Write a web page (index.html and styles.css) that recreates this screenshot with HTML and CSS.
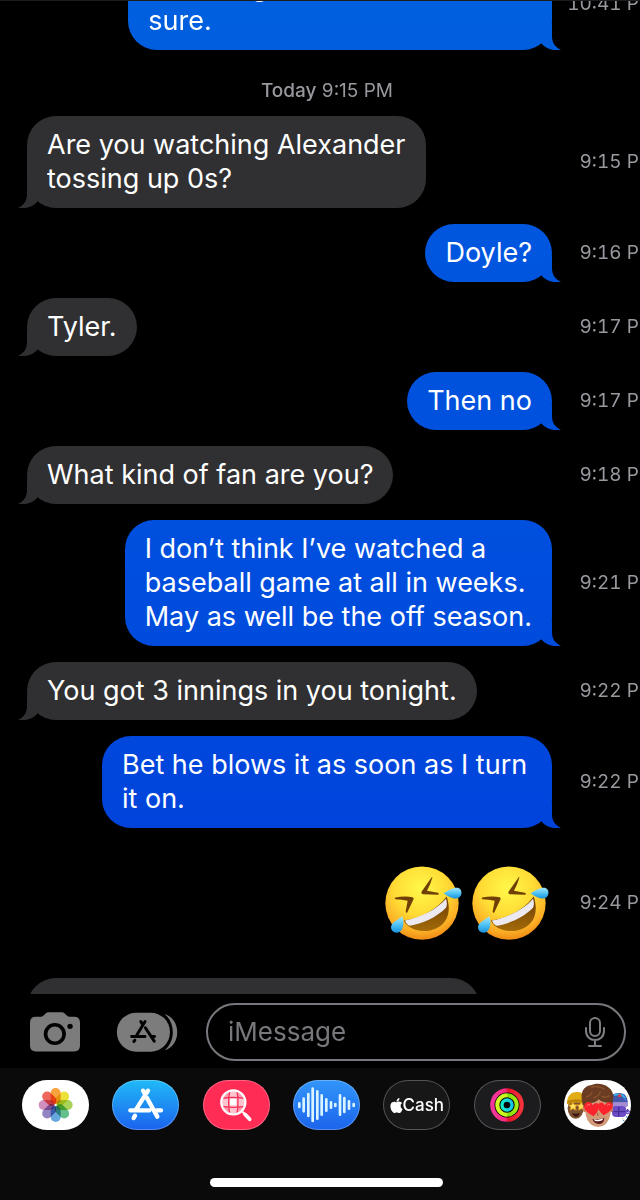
FILE: index.html
```html
<!DOCTYPE html>
<html lang="en">
<head>
<meta charset="utf-8">
<meta name="viewport" content="width=device-width, initial-scale=1">
<title>Messages</title>
<link rel="stylesheet" href="styles.css">
</head>
<body>
<svg class="defs" aria-hidden="true">
  <defs>
    <radialGradient id="face" cx=".48" cy=".3" r=".72">
      <stop offset="0" stop-color="#fff84a"/><stop offset=".5" stop-color="#ffdb35"/><stop offset=".82" stop-color="#fbae25"/><stop offset="1" stop-color="#ed8413"/>
    </radialGradient>
    <linearGradient id="tear" x1="0" y1="0" x2="0" y2="1">
      <stop offset="0" stop-color="#a5e9ff"/><stop offset=".55" stop-color="#4cc0f4"/><stop offset="1" stop-color="#1692dd"/>
    </linearGradient>
    <linearGradient id="mouth" x1="0" y1="0" x2="0" y2="1">
      <stop offset="0" stop-color="#6e3c04"/><stop offset="1" stop-color="#a26a08"/>
    </linearGradient>
    <symbol id="rofl" viewBox="40 45 246 230">
      <circle cx="157" cy="159" r="110" fill="url(#face)"/>
      <path d="M77 142Q105 137 129 141Q134 143 131 149L113 186Q109 191 108 184L114 152Q96 147 77 147Q73 144 77 142Z" fill="#6f3f05"/>
      <path d="M188 82Q189 78 184 84L156 124Q153 131 160 132L205 134Q211 131 204 128L172 122Q183 102 188 82Z" fill="#6f3f05"/>
      <path d="M102 211C150 205 203 178 231 139C244 177 238 217 201 234C164 251 118 242 102 211Z" fill="url(#mouth)"/>
      <path d="M106 211C151 203 204 177 229 146C233 157 232 167 229 173C201 202 157 221 120 227C112 223 107 216 106 211Z" fill="#eceaf0"/>
      <path d="M222 129C236 120 253 111 265 113C282 118 277 146 259 145C246 145 231 136 222 129Z" fill="url(#tear)"/>
      <path d="M98 198C104 214 102 236 91 244C77 254 60 241 65 226C69 215 86 208 98 198Z" fill="url(#tear)"/>
    </symbol>
    <linearGradient id="pink" x1="0" x2="1"><stop offset="0" stop-color="#f4369c"/><stop offset=".45" stop-color="#f92d80"/><stop offset=".55" stop-color="#e6142c"/><stop offset="1" stop-color="#f5333c"/></linearGradient>
    <linearGradient id="lime" x1="0" x2="1"><stop offset="0" stop-color="#d2fb22"/><stop offset=".5" stop-color="#c4f51c"/><stop offset=".55" stop-color="#7edb08"/><stop offset="1" stop-color="#a5ee12"/></linearGradient>
    <linearGradient id="aqua" x1="0" x2="1"><stop offset="0" stop-color="#16eccb"/><stop offset="1" stop-color="#13c7e8"/></linearGradient>
  </defs>
</svg>

<div class="phone">
  <main class="transcript">
    <div class="thread">
      <div class="row sent">
        <p class="bubble">Watching for them to lose, but<br>sure.<span class="tail"></span></p>
        <time>10:41 PM</time>
      </div>
      <p class="date"><b>Today</b> 9:15 PM</p>
      <div class="row received">
        <p class="bubble">Are you watching Alexander<br>tossing up 0s?<span class="tail"></span></p>
        <time>9:15 PM</time>
      </div>
      <div class="row sent">
        <p class="bubble">Doyle?<span class="tail"></span></p>
        <time>9:16 PM</time>
      </div>
      <div class="row received">
        <p class="bubble">Tyler.<span class="tail"></span></p>
        <time>9:17 PM</time>
      </div>
      <div class="row sent">
        <p class="bubble">Then no<span class="tail"></span></p>
        <time>9:17 PM</time>
      </div>
      <div class="row received">
        <p class="bubble">What kind of fan are you?<span class="tail"></span></p>
        <time>9:18 PM</time>
      </div>
      <div class="row sent">
        <p class="bubble">I don’t think I’ve watched a<br>baseball game at all in weeks.<br>May as well be the off season.<span class="tail"></span></p>
        <time>9:21 PM</time>
      </div>
      <div class="row received">
        <p class="bubble">You got 3 innings in you tonight.<span class="tail"></span></p>
        <time>9:22 PM</time>
      </div>
      <div class="row sent">
        <p class="bubble wrapped">Bet he blows it as soon as I turn it on.<span class="tail"></span></p>
        <time>9:22 PM</time>
      </div>
      <div class="row sent">
        <div class="emoji" role="img" aria-label="Rolling on the floor laughing, twice">
          <svg><use href="#rofl"/></svg>
          <svg><use href="#rofl"/></svg>
        </div>
        <time>9:24 PM</time>
      </div>
      <div class="row received">
        <div class="bubble next"></div>
      </div>
    </div>
  </main>

  <form class="composer">
    <button type="button" class="tool camera" aria-label="Camera">
      <svg viewBox="90 157 151 120">
        <path d="M108 171H122Q127 171 131 167L138 160Q141 157 146 157H186Q191 157 194 160L201 167Q205 171 210 171H223Q241 171 241 189V258Q241 276 223 276H108Q90 276 90 258V189Q90 171 108 171Z" fill="#7c7c7c"/>
        <circle cx="165" cy="223" r="28" fill="none" stroke="#000" stroke-width="11"/>
        <circle cx="211" cy="200" r="8" fill="#000"/>
      </svg>
    </button>
    <button type="button" class="tool apps" aria-label="Apps">
      <svg viewBox="348 155 186 122">
        <rect x="349" y="157" width="162" height="119" rx="59" fill="#7c7c7c"/>
        <path d="M495 161C546 178 546 255 495 272C528 243 528 190 495 161Z" fill="#7c7c7c"/>
        <g fill="none" stroke="#000" stroke-width="9" stroke-linecap="round">
          <path d="M435 184L410 225M422 184L427 192M436 203L463 244M394 230H435M454 230H464M404 241L401 245"/>
        </g>
      </svg>
    </button>
    <div class="field">
      <input type="text" placeholder="iMessage" aria-label="iMessage">
      <button type="button" class="mic" aria-label="Dictate">
        <svg viewBox="0 0 22 32" fill="none" stroke="#7e7e82" stroke-width="2" stroke-linecap="round">
          <rect x="6" y="2" width="10" height="18" rx="5"/>
          <path d="M2 12V15C2 27 20 27 20 15V12M11 24V30M5 30H17"/>
        </svg>
      </button>
    </div>
  </form>

  <footer class="drawer">
    <nav class="strip" aria-label="iMessage apps">
      <button type="button" class="pill white" aria-label="Photos">
        <svg viewBox="65 30 201 150">
          <g class="petals">
            <rect x="151" y="54" width="30" height="48" rx="15" fill="#f9a33c"/>
            <rect x="151" y="54" width="30" height="48" rx="15" fill="#ece13a" transform="rotate(45 166 105)"/>
            <rect x="151" y="54" width="30" height="48" rx="15" fill="#a9d35a" transform="rotate(90 166 105)"/>
            <rect x="151" y="54" width="30" height="48" rx="15" fill="#65bf8c" transform="rotate(135 166 105)"/>
            <rect x="151" y="54" width="30" height="48" rx="15" fill="#67a8de" transform="rotate(180 166 105)"/>
            <rect x="151" y="54" width="30" height="48" rx="15" fill="#9285c2" transform="rotate(225 166 105)"/>
            <rect x="151" y="54" width="30" height="48" rx="15" fill="#d18fbd" transform="rotate(270 166 105)"/>
            <rect x="151" y="54" width="30" height="48" rx="15" fill="#ef665c" transform="rotate(315 166 105)"/>
          </g>
        </svg>
      </button>
      <button type="button" class="pill store" aria-label="App Store">
        <svg viewBox="336 30 201 150" fill="none" stroke="#fff" stroke-width="13" stroke-linecap="round">
          <path d="M444 62L408 119M429 62L435 72M441 84L472 140M391 121H448M470 121H483M405 137L401 144"/>
        </svg>
      </button>
      <button type="button" class="pill images" aria-label="Images">
        <svg viewBox="38 30 201 150">
          <circle cx="129" cy="97" r="33" fill="#ff9caf"/>
          <path d="M116 64H142V130H116ZM96 86H162V108H96Z" fill="#ffc4cf"/>
          <path d="M119 87H138V106H119Z" fill="#fff"/>
          <path d="M96 85Q129 79 162 85M96 109Q129 115 162 109M118 64Q112 97 118 130M140 64Q146 97 140 130" fill="none" stroke="#f92e55" stroke-width="4"/>
          <circle cx="129" cy="97" r="36" fill="none" stroke="#fff" stroke-width="7"/>
          <path d="M156 125L163 132" stroke="#fff" stroke-width="6"/>
          <path d="M164 133L178 148" stroke="#fff" stroke-width="11" stroke-linecap="round"/>
        </svg>
      </button>
      <button type="button" class="pill audio" aria-label="Audio">
        <svg viewBox="309 30 201 150" stroke="#d9f3ff" stroke-width="8" stroke-linecap="round">
          <path d="M328 100V111M341 86V124M355 72V138M368 56V153M382 64V146M395 76V134M409 88V122M423 97V113M436 102V108M450 76V134M463 84V126M477 94V116M491 102V108"/>
        </svg>
      </button>
      <button type="button" class="pill cash" aria-label="Apple Cash">
        <svg class="apple" viewBox="2 0 20 24" fill="#fff"><path d="M12.152 6.896c-.948 0-2.415-1.078-3.96-1.04-2.04.027-3.91 1.183-4.961 3.014-2.117 3.675-.546 9.103 1.519 12.09 1.013 1.454 2.208 3.09 3.792 3.039 1.52-.065 2.09-.987 3.935-.987 1.831 0 2.35.987 3.96.948 1.637-.026 2.676-1.48 3.676-2.948 1.156-1.688 1.636-3.325 1.662-3.415-.039-.013-3.182-1.221-3.22-4.857-.026-3.04 2.48-4.494 2.597-4.559-1.429-2.09-3.623-2.324-4.39-2.376-2-.156-3.675 1.09-4.61 1.09zM15.53 3.83c.843-1.012 1.4-2.427 1.245-3.83-1.207.052-2.662.805-3.532 1.818-.78.896-1.454 2.338-1.273 3.714 1.338.104 2.715-.688 3.559-1.701"/></svg>
        <span>Cash</span>
      </button>
      <button type="button" class="pill fitness" aria-label="Fitness">
        <svg viewBox="312 30 201 150" fill="none">
          <circle cx="411" cy="105" r="50" fill="#050505"/>
          <circle cx="411" cy="105" r="44" stroke="url(#pink)" stroke-width="13"/>
          <circle cx="411" cy="105" r="29" stroke="url(#lime)" stroke-width="12"/>
          <circle cx="411" cy="105" r="15" stroke="url(#aqua)" stroke-width="10"/>
        </svg>
      </button>
      <button type="button" class="pill white" aria-label="Memoji">
        <svg viewBox="42 30 201 150">
          <ellipse cx="77" cy="115" rx="24" ry="31" fill="#7b5033"/>
          <path d="M51 103C50 78 63 65 83 66C100 67 108 82 106 102Q78 92 51 103Z" fill="#e2ac15"/>
          <path d="M52 93Q78 82 106 94V101Q78 91 52 101Z" fill="#bb8508"/>
          <path d="M68 95L73 104L83 104L76 111L79 121L69 116L60 121L62 111L55 105L65 104ZM93 95L98 104L108 104L101 111L104 121L94 116L85 121L87 111L80 105L90 104Z" fill="#ffdf5b" stroke="#d08c08" stroke-width="2"/>
          <path d="M66 129Q78 134 89 128Q86 142 76 140Q68 138 66 129Z" fill="#3e1712"/>
          <path d="M185 77Q191 68 209 69Q226 70 231 85L234 98H185Z" fill="#4358ad"/>
          <path d="M192 76Q211 68 226 84" fill="none" stroke="#38b6e7" stroke-width="5"/>
          <circle cx="209" cy="77" r="5" fill="#e63b43"/>
          <rect x="183" y="97" width="51" height="14" rx="5" fill="#a68bd0"/>
          <rect x="186" y="108" width="43" height="33" rx="12" fill="#6d4cc8"/>
          <path d="M190 125H233V117M206 111V140" fill="none" stroke="#453091" stroke-width="4"/>
          <circle cx="233" cy="126" r="5" fill="none" stroke="#7155cc" stroke-width="4"/>
          <path d="M221 71V75M226 88V91M230 139V143M221 149V153" stroke="#4597f3" stroke-width="4"/>
          <path d="M233 76V80M217 144V147" stroke="#edc642" stroke-width="3"/>
          <ellipse cx="105" cy="114" rx="7" ry="13" fill="#c87e54"/>
          <ellipse cx="182" cy="114" rx="7" ry="13" fill="#c87e54"/>
          <path d="M104 91Q105 57 143 57Q183 58 184 92L181 134Q173 170 144 171Q115 169 107 135Z" fill="#d29a78"/>
          <path d="M98 102C88 66 102 49 121 46C151 32 191 50 190 81L187 108L179 98Q158 99 146 88Q133 103 110 98L104 112Z" fill="#6a3d22"/>
          <path d="M108 81Q119 79 127 67M130 84Q148 78 151 64M155 79Q173 85 179 76M122 51Q145 46 164 57" fill="none" stroke="#8a532e" stroke-width="4"/>
          <path d="M130 139Q98 121 103 106C108 92 124 94 128 106C136 93 149 99 147 112Q144 128 130 139Z" fill="#fc242c"/>
          <path d="M161 136Q141 119 144 105C149 93 161 97 164 106C173 91 191 96 188 110Q183 124 161 136Z" fill="#fc242c"/>
          <path d="M111 107Q116 100 120 105M171 107Q176 100 181 105" fill="none" stroke="#ff7775" stroke-width="3"/>
          <path d="M143 128V138" stroke="#b7754f" stroke-width="5"/>
          <path d="M127 147Q146 150 163 143Q162 162 146 162Q132 161 127 147Z" fill="#5b1918"/>
          <path d="M131 148Q147 151 160 145L157 151Q145 156 134 152Z" fill="#fff"/>
        </svg>
      </button>
    </nav>
    <div class="home"></div>
  </footer>
</div>
</body>
</html>
```
FILE: styles.css
```css
* { box-sizing: border-box; }

body {
  margin: 0;
  background: #000;
  color: #fff;
  font-family: Inter, "Liberation Sans", sans-serif;
}

p { margin: 0; }

button {
  padding: 0;
  border: 0;
  background: none;
  font: inherit;
  color: inherit;
}

svg { display: block; }

.defs {
  position: absolute;
  width: 0;
  height: 0;
}

.phone {
  display: flex;
  flex-direction: column;
  height: 100vh;
  overflow: hidden;
}

/* Conversation */

.transcript {
  flex: 1;
  min-height: 0;
  overflow: hidden;
  border-top: 1px solid #1c1c1e;
}

.thread {
  display: flex;
  flex-direction: column;
  gap: 16px;
  margin: -43px -16px 0 27px;
}

.row {
  display: flex;
  align-items: center;
  justify-content: space-between;
}

.row.sent { justify-content: flex-end; }

.bubble {
  position: relative;
  padding: 12px 20px;
  border-radius: 29px;
  font-size: 27px;
  line-height: 34px;
  white-space: nowrap;
}

.bubble.wrapped {
  max-width: 450px;
  white-space: normal;
}

.received .bubble { background: #303032; }

.sent .bubble {
  background: linear-gradient(#0060df, #0054de 25%, #004ddd 50%, #0043dc 70%) fixed;
}

.tail {
  position: absolute;
  right: -9px;
  bottom: 0;
  width: 24px;
  height: 29px;
  background: inherit;
  clip-path: path("M15 0V15C15 22 18 26 24 29C16 30 9 28 4 22C10 17 14 8 15 0Z");
}

.received .tail {
  right: auto;
  left: -9px;
  transform: scaleX(-1);
}

time {
  flex: none;
  width: 104px;
  color: #98989f;
  font-size: 19px;
  font-variant-numeric: tabular-nums;
  line-height: 24px;
  text-align: right;
  white-space: nowrap;
}

.date {
  padding: 16px 29px 0 0;
  color: #98989f;
  font-size: 19px;
  line-height: 18px;
  text-align: center;
}

.date b { font-weight: 500; }

.emoji {
  display: flex;
  align-items: center;
  gap: 5px;
  height: 118px;
}

.emoji svg {
  width: 82px;
  height: 77px;
}

.next {
  width: 72%;
  height: 58px;
}

/* Composer */

.composer {
  display: flex;
  align-items: center;
  padding: 9px 14px 7px 30px;
}

.camera svg {
  width: 50px;
  height: 40px;
}

.apps { margin: 0 28px 0 36px; }

.apps svg {
  width: 62px;
  height: 40px;
}

.field {
  display: flex;
  flex: 1;
  align-items: center;
  min-width: 0;
  height: 58px;
  padding: 0 18px 0 20px;
  border: 2px solid #77777d;
  border-radius: 29px;
}

.field input {
  flex: 1;
  width: 100%;
  min-width: 0;
  padding: 0;
  border: 0;
  outline: 0;
  background: none;
  color: #fff;
  font: 26px/34px Inter, "Liberation Sans", sans-serif;
}

.field input::placeholder {
  color: #77777c;
  opacity: 1;
}

.mic svg {
  width: 22px;
  height: 32px;
}

/* App drawer */

.drawer {
  padding: 12px 9px 13px 22px;
  background: #0a0a0a;
}

.strip {
  display: flex;
  justify-content: space-between;
}

.pill {
  display: flex;
  align-items: center;
  justify-content: center;
  width: 67px;
  height: 50px;
  overflow: hidden;
  border-radius: 25px;
  box-shadow: inset 0 0 0 1px #ffffff44;
}

.pill svg {
  width: 67px;
  height: 50px;
}

.white { background: #fff; }
.store { background: linear-gradient(#20baf7, #1b62ee); }
.images { background: #ff2d55; }
.audio { background: linear-gradient(#3295fa, #1b64eb); }
.cash { background: #171717; }
.fitness { background: #1c1c1f; }

.petals { isolation: isolate; }
.petals rect { mix-blend-mode: multiply; }

.cash .apple {
  width: 13px;
  height: 15px;
}

.cash span {
  font-size: 17px;
  font-weight: 500;
  line-height: 20px;
}

.home {
  width: 233px;
  height: 9px;
  margin: 48px auto 0;
  border-radius: 5px;
  background: #fff;
}
```
